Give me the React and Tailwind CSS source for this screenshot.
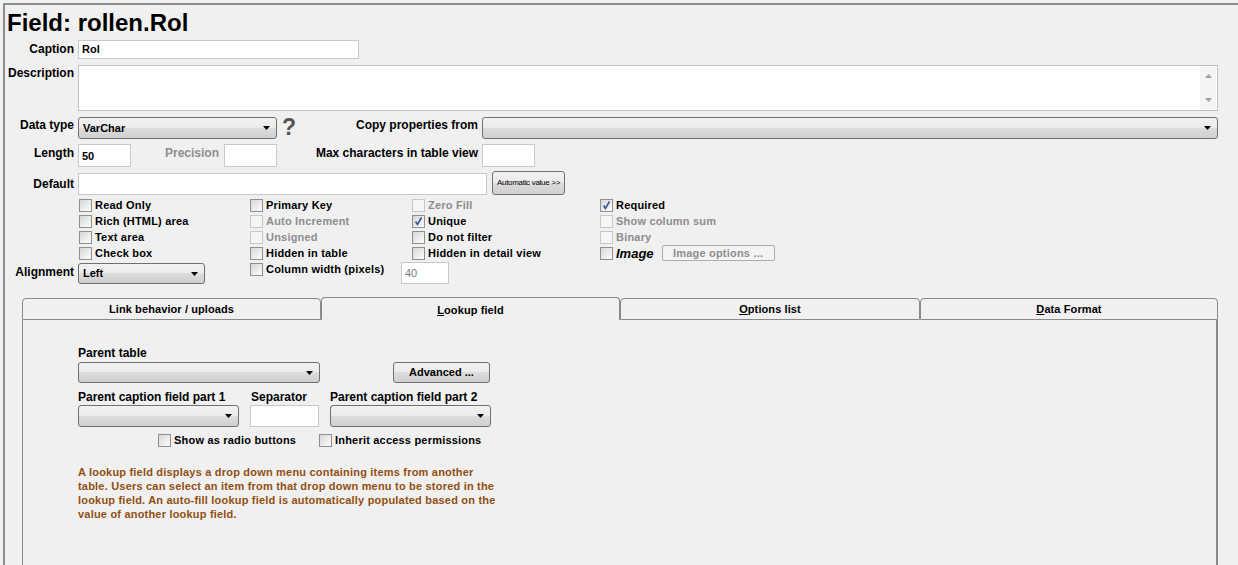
import React from 'react';

const grad = 'bg-[linear-gradient(to_bottom,#f2f2f2_0%,#ebebeb_50%,#dddddd_50%,#cfcfcf_100%)]';

// small select box with windows-7 look
const Select = ({ value, className }) => (
  <div className={`flex items-center shrink-0 rounded-[3px] border border-[#707070] ${grad} pl-[4px] pr-[6px] ${className}`}>
    <span className="flex-1 text-[11px] font-bold leading-none">{value}</span>
    <svg width="7" height="4" viewBox="0 0 7 4"><path d="M0 0h7L3.5 4z" fill="#000" /></svg>
  </div>
);

const Input = ({ value, className, gray }) => (
  <div className={`flex items-center shrink-0 bg-white border border-[#c9c9c9] pl-[3px] text-[11px] leading-none ${gray ? 'text-[#7a7a7a]' : 'font-bold'} ${className}`}>
    {value}
  </div>
);

const Label = ({ children, className }) => (
  <div className={`shrink-0 text-right text-[12px] font-bold leading-[17px] ${className}`}>{children}</div>
);

const Box = ({ checked, disabled }) => (
  <span
    className={`flex h-[13px] w-[13px] shrink-0 items-center justify-center border ${
      disabled
        ? 'border-[#c7c7c7] bg-[#f5f5f5]'
        : 'border-[#8e8f8f] bg-[linear-gradient(135deg,#d6d6d6_0%,#f6f6f6_80%,#ffffff_100%)]'
    }`}
  >
    {checked && (
      <svg width="11" height="11" viewBox="0 0 11 11">
        <path d="M2.5 5.5 L4.5 8.5 L8.5 1.5" fill="none" stroke="#3b5a9a" strokeWidth="1.7" />
      </svg>
    )}
  </span>
);

const Check = ({ label, checked, disabled, className }) => (
  <div className={`flex h-[16px] items-start ${className || ''}`}>
    <Box checked={checked} disabled={disabled} />
    <span className={`ml-[3px] whitespace-nowrap text-[11px] font-bold leading-[13px] tracking-[0.2px] ${disabled ? 'text-[#8d8d8d]' : 'text-black'}`}>
      {label}
    </span>
  </div>
);

const Tab = ({ children, active, className }) => (
  <div
    className={`flex items-center justify-center rounded-t-[4px] border-x border-t border-[#8a8a8a] bg-[#f0f0f0] text-[11px] font-bold tracking-[0.1px] ${
      active ? 'h-[23px] pt-[2px]' : 'h-[22px] border-b'
    } ${className}`}
  >
    {children}
  </div>
);

const App = () => {
  return (
    <div className="min-h-screen bg-[#f0f0f0] pl-[3px] pt-[3px] font-['Liberation_Sans',Arial,sans-serif] text-black">
      <div className="min-h-[562px] border-l-2 border-t-2 border-[#8c8c8c]">
        {/* Title */}
        <div className="ml-[2px] mt-[4px] text-[24px] font-bold leading-[28px]">Field: rollen.Rol</div>

        {/* Caption */}
        <div className="mt-[3px] flex items-start">
          <Label className="mr-[4px] w-[69px] pt-[1px]">Caption</Label>
          <Input value="Rol" className="h-[19px] w-[281px]" />
        </div>

        {/* Description */}
        <div className="mt-[6px] flex items-start">
          <Label className="mr-[4px] w-[69px] leading-[15px]">Description</Label>
          <div className="flex h-[46px] w-[1140px] justify-end border border-[#c2c2c2] bg-white">
            <div className="m-[1px] flex w-[16px] flex-col items-center justify-between bg-[#f4f4f4] py-[7px]">
              <svg width="7" height="4" viewBox="0 0 7 4"><path d="M0 4h7L3.5 0z" fill="#a0a0a0" /></svg>
              <svg width="7" height="4" viewBox="0 0 7 4"><path d="M0 0h7L3.5 4z" fill="#a0a0a0" /></svg>
            </div>
          </div>
        </div>

        {/* Data type */}
        <div className="mt-[6px] flex items-start">
          <Label className="mr-[4px] w-[69px]">Data type</Label>
          <Select value="VarChar" className="h-[22px] w-[199px]" />
          <div className="w-[20px] pl-[5px] text-[23px] font-bold leading-[21px] text-[#555]">?</div>
          <Label className="mr-[4px] w-[181px]">Copy properties from</Label>
          <Select value="" className="h-[22px] w-[736px]" />
        </div>

        {/* Length / precision / max chars */}
        <div className="mt-[5px] flex items-start">
          <Label className="mr-[4px] w-[69px] pt-[1px]">Length</Label>
          <Input value="50" className="h-[23px] w-[53px] pt-[2px]" />
          <Label className="mr-[5px] w-[88px] pt-[1px] text-[#8d8d8d]">Precision</Label>
          <Input value="" className="h-[23px] w-[53px]" />
          <Label className="mr-[4px] w-[201px] pt-[1px]">Max characters in table view</Label>
          <Input value="" className="h-[23px] w-[53px]" />
        </div>

        {/* Default */}
        <div className="mt-[4px] flex items-start">
          <Label className="mr-[4px] mt-[4px] w-[69px] leading-[19px]">Default</Label>
          <Input value="" className="mt-[2px] h-[22px] w-[409px]" />
          <div className={`ml-[5px] flex h-[24px] w-[73px] items-center justify-center rounded-[3px] border border-[#707070] ${grad} whitespace-nowrap text-[8px] tracking-[-0.3px]`}>
            Automatic value &gt;&gt;
          </div>
        </div>

        {/* Checkboxes */}
        <div className="ml-[74px] mt-[4px] grid grid-cols-[171px_162px_188px_auto]">
          <Check label="Read Only" />
          <Check label="Primary Key" />
          <Check label="Zero Fill" disabled />
          <Check label="Required" checked />

          <Check label="Rich (HTML) area" />
          <Check label="Auto Increment" disabled />
          <Check label="Unique" checked />
          <Check label="Show column sum" disabled />

          <Check label="Text area" />
          <Check label="Unsigned" disabled />
          <Check label="Do not filter" />
          <Check label="Binary" disabled />

          <Check label="Check box" />
          <Check label="Hidden in table" />
          <Check label="Hidden in detail view" />
          <div className="flex h-[16px] items-start">
            <Box />
            <span className="ml-[3px] text-[13px] font-bold italic leading-[13px]">Image</span>
            <div className="ml-[8px] -mt-[2px] flex h-[16px] w-[113px] items-center justify-center rounded-[2px] border border-[#adadad] bg-[#f4f4f4] text-[11px] font-bold tracking-[0.2px] text-[#8d8d8d]">
              Image options ...
            </div>
          </div>
        </div>

        {/* Alignment / column width */}
        <div className="flex items-start">
          <Label className="mr-[4px] w-[69px] leading-[19px]">Alignment</Label>
          <Select value="Left" className="h-[21px] w-[127px]" />
          <Check label="Column width (pixels)" className="ml-[45px] w-[151px]" />
          <Input value="40" gray className="-mt-[1px] h-[22px] w-[48px] pt-[1px]" />
        </div>

        {/* Tabs */}
        <div className="ml-[17px] mt-[13px] w-[1196px]">
          <div className="flex h-[23px] items-end">
            <Tab className="w-[299px]">Link behavior / uploads</Tab>
            <Tab active className="w-[299px]">
              <span><span className="underline">L</span>ookup field</span>
            </Tab>
            <Tab className="w-[300px]">
              <span><span className="underline">O</span>ptions list</span>
            </Tab>
            <Tab className="w-[298px]">
              <span><span className="underline">D</span>ata Format</span>
            </Tab>
          </div>

          <div className="h-[260px] border-l border-r-2 border-[#8a8a8a] pl-[55px] pt-[25px]">
            <div className="flex items-end">
              <div className="w-[315px]">
                <div className="text-[12px] font-bold leading-[17px]">Parent table</div>
                <Select value="" className="h-[21px] w-[242px]" />
              </div>
              <div className={`flex h-[21px] w-[97px] items-center justify-center rounded-[3px] border border-[#707070] ${grad} text-[11px] font-bold`}>
                Advanced ...
              </div>
            </div>

            <div className="mt-[7px] flex gap-[11px]">
              <div>
                <div className="text-[12px] font-bold leading-[15px]">Parent caption field part 1</div>
                <Select value="" className="h-[22px] w-[161px]" />
              </div>
              <div>
                <div className="pl-[1px] text-[12px] font-bold leading-[15px]">Separator</div>
                <Input value="" className="h-[22px] w-[69px]" />
              </div>
              <div>
                <div className="text-[12px] font-bold leading-[15px]">Parent caption field part 2</div>
                <Select value="" className="h-[22px] w-[161px]" />
              </div>
            </div>

            <div className="ml-[80px] mt-[7px] flex">
              <Check label="Show as radio buttons" className="w-[161px]" />
              <Check label="Inherit access permissions" />
            </div>

            <p className="mt-[15px] whitespace-nowrap text-[11px] font-bold leading-[14px] tracking-[0.2px] text-[#924f12]">
              A lookup field displays a drop down menu containing items from another
              <br />
              table. Users can select an item from that drop down menu to be stored in the
              <br />
              lookup field. An auto-fill lookup field is automatically populated based on the
              <br />
              value of another lookup field.
            </p>
          </div>
        </div>
      </div>
    </div>
  );
};

export default App;
